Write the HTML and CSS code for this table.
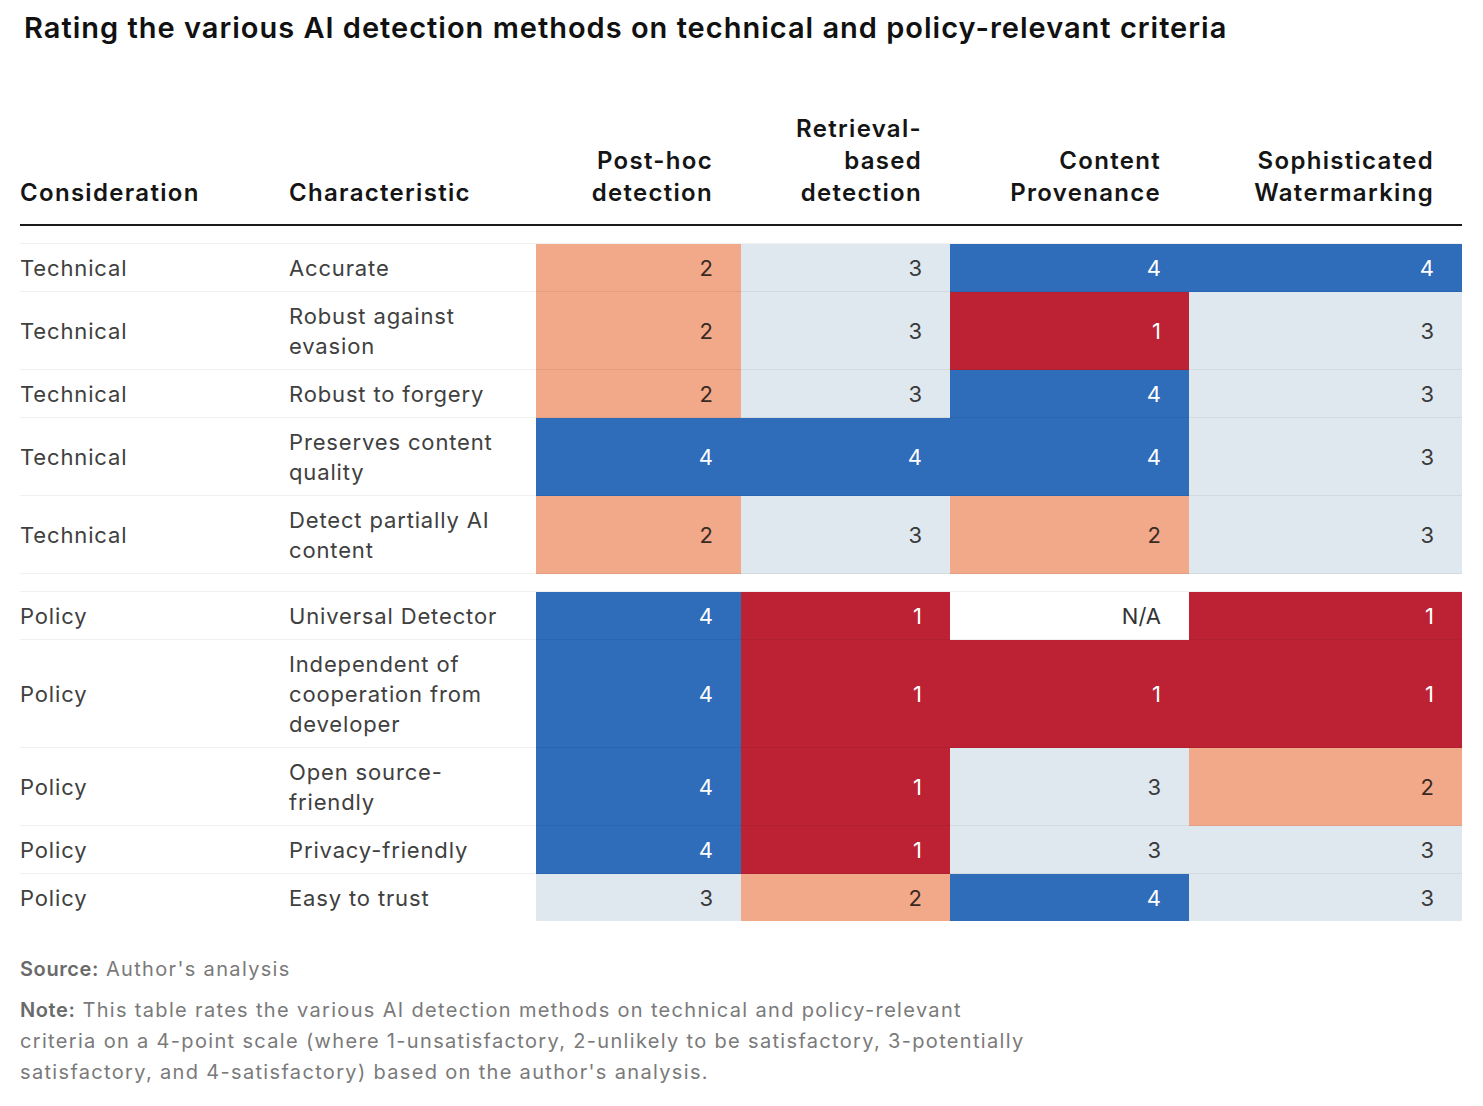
FILE: index.html
```html
<!DOCTYPE html>
<html lang="en">
<head>
<meta charset="utf-8">
<title>Rating AI detection methods</title>
<link rel="stylesheet" href="styles.css">
</head>
<body>
<h1 class="title">Rating the various AI detection methods on technical and policy-relevant criteria</h1>
<table class="ratings">
  <colgroup>
    <col class="c-cons"><col class="c-char"><col class="c-post"><col class="c-retr"><col class="c-prov"><col class="c-water">
  </colgroup>
  <thead>
    <tr>
      <th class="h-left">Consideration</th>
      <th class="h-left">Characteristic</th>
      <th class="h-num">Post-hoc<br>detection</th>
      <th class="h-num">Retrieval-<br>based<br>detection</th>
      <th class="h-num">Content<br>Provenance</th>
      <th class="h-num">Sophisticated<br>Watermarking</th>
    </tr>
  </thead>
  <tbody>
    <tr class="spacer"><td colspan="6"></td></tr>
    <tr><td>Technical</td><td>Accurate</td><td class="s2">2</td><td class="s3">3</td><td class="s4">4</td><td class="s4">4</td></tr>
    <tr><td>Technical</td><td>Robust against<br>evasion</td><td class="s2">2</td><td class="s3">3</td><td class="s1">1</td><td class="s3">3</td></tr>
    <tr><td>Technical</td><td>Robust to forgery</td><td class="s2">2</td><td class="s3">3</td><td class="s4">4</td><td class="s3">3</td></tr>
    <tr><td>Technical</td><td>Preserves content<br>quality</td><td class="s4">4</td><td class="s4">4</td><td class="s4">4</td><td class="s3">3</td></tr>
    <tr><td>Technical</td><td>Detect partially AI<br>content</td><td class="s2">2</td><td class="s3">3</td><td class="s2">2</td><td class="s3">3</td></tr>
    <tr class="spacer"><td colspan="6"></td></tr>
    <tr><td>Policy</td><td>Universal Detector</td><td class="s4">4</td><td class="s1">1</td><td class="na">N/A</td><td class="s1">1</td></tr>
    <tr><td>Policy</td><td>Independent of<br>cooperation from<br>developer</td><td class="s4">4</td><td class="s1">1</td><td class="s1">1</td><td class="s1">1</td></tr>
    <tr><td>Policy</td><td>Open source-<br>friendly</td><td class="s4">4</td><td class="s1">1</td><td class="s3">3</td><td class="s2">2</td></tr>
    <tr><td>Policy</td><td>Privacy-friendly</td><td class="s4">4</td><td class="s1">1</td><td class="s3">3</td><td class="s3">3</td></tr>
    <tr><td>Policy</td><td>Easy to trust</td><td class="s3">3</td><td class="s2">2</td><td class="s4">4</td><td class="s3">3</td></tr>
  </tbody>
</table>
<div class="footnotes">
  <p class="source"><b class="label">Source:</b> Author's analysis</p>
  <p class="note"><b class="label">Note:</b> This table rates the various AI detection methods on technical and policy-relevant<br>criteria on a 4-point scale (where 1-unsatisfactory, 2-unlikely to be satisfactory, 3-potentially<br>satisfactory, and 4-satisfactory) based on the author's analysis.</p>
</div>
</body>
</html>
```

FILE: styles.css
```css
html, body {
  background: #ffffff;
}
body {
  margin: 10px 21px 0 20px;
  font-family: Inter, "Noto Sans", "Liberation Sans", sans-serif;
  color: #333333;
}
.title {
  margin: 0 0 0 4px;
  font-size: 29px;
  line-height: 36px;
  font-weight: 600;
  color: #111111;
  letter-spacing: 1px;
  white-space: nowrap;
}
.ratings {
  margin-top: 55px;
  width: 1442px;
  border-collapse: collapse;
  table-layout: fixed;
}
.c-cons { width: 269px; }
.c-char { width: 247px; }
.c-post { width: 205px; }
.c-retr { width: 209px; }
.c-prov { width: 239px; }
.c-water { width: 273px; }

.ratings thead th {
  font-size: 24px;
  line-height: 32px;
  font-weight: 600;
  color: #151515;
  letter-spacing: 1.3px;
  vertical-align: bottom;
  padding: 12px 28px 15px 0;
  border-bottom: 2px solid #1a1a1a;
}
.ratings thead th.h-left {
  text-align: left;
  padding-left: 0;
}
.ratings thead th.h-num {
  text-align: right;
}
.ratings tbody td {
  font-size: 22px;
  line-height: 30px;
  padding: 9px 0 8px 0;
  border-top: 1px solid rgba(0, 0, 0, 0.06);
  vertical-align: middle;
  color: #404040;
  letter-spacing: 0.85px;
}
.ratings tbody tr.spacer td {
  padding: 0;
  height: 17px;
  line-height: 0;
  font-size: 0;
}
.ratings tbody tr.spacer:first-child td {
  border-top: none;
}
.ratings tbody td.s1,
.ratings tbody td.s2,
.ratings tbody td.s3,
.ratings tbody td.s4,
.ratings tbody td.na {
  text-align: right;
  padding-right: 28px;
  letter-spacing: 0;
}
.s1 {
  background: #bc2233;
  color: #ffffff !important;
}
.s2 {
  background: #f1a98a;
  color: #3a2a24 !important;
}
.s3 {
  background: #e0e8ef;
  color: #3a3a3a !important;
}
.s4 {
  background: #2f6cba;
  color: #ffffff !important;
}
.na {
  background: #ffffff;
  color: #333333 !important;
}
.footnotes {
  margin-top: 33px;
  color: #7a7a7a;
  font-size: 20px;
  line-height: 31px;
  letter-spacing: 1.33px;
  white-space: nowrap;
}
.footnotes p {
  margin: 0;
}
.footnotes .label {
  font-weight: 600;
  color: #6a6a6a;
  letter-spacing: 0.6px;
}
.source {
  margin-bottom: 10px !important;
}
```
